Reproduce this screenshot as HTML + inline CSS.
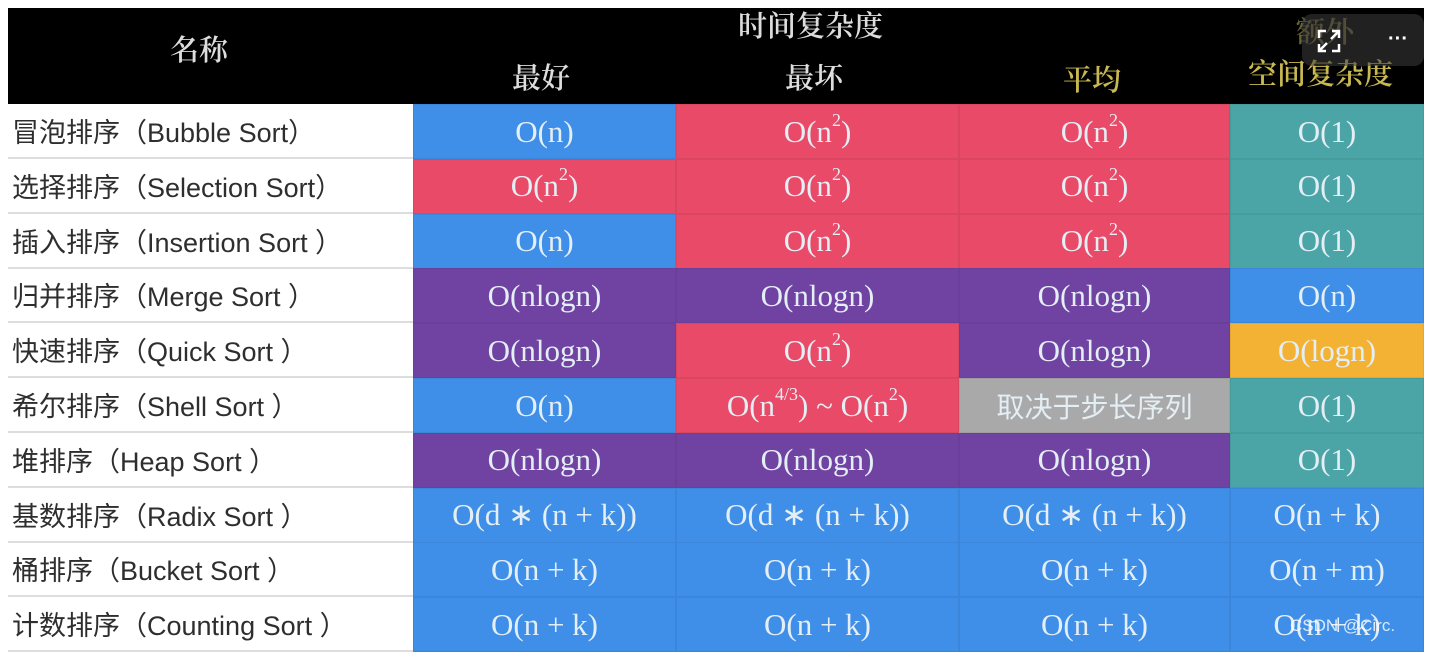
<!DOCTYPE html>
<html><head><meta charset="utf-8"><style>
body{margin:0;width:1432px;height:662px;background:#fff;position:relative;overflow:hidden;font-family:"Liberation Serif","Noto Serif CJK SC",serif}
.c{position:absolute;display:flex;align-items:center;justify-content:center;color:#e4eef5;font-size:31px;box-sizing:border-box;white-space:nowrap}
.n{justify-content:flex-start;color:#2e2e2e;font-family:"Liberation Sans","Noto Sans CJK SC",sans-serif;font-size:27px;padding-left:4px;border-bottom:2px solid #ddd}
.h{position:absolute;color:#ddd;font-family:"Noto Serif CJK SC",serif;font-size:29px;font-weight:600}
.B{background:#3f8fe9}.R{background:#e84a67}.P{background:#7043a3}.T{background:#4ba5a6}.O{background:#f3b233}.G{background:#a9a9a9}
sup{font-size:18px;position:relative;top:-12px;vertical-align:baseline;line-height:0}
.f{font-family:"Noto Sans CJK SC",sans-serif;font-size:28px}
</style></head><body>
<div style="position:absolute;left:8px;top:8px;width:1416px;height:96px;background:#000"></div>
<div class="h" style="left:170px;top:28px">名称</div>
<div class="h" style="left:738px;top:4px">时间复杂度</div>
<div class="h" style="left:512px;top:56px">最好</div>
<div class="h" style="left:785px;top:56px">最坏</div>
<div class="h" style="left:1063px;top:58px;color:#c8b850">平均</div>
<div class="h" style="left:1296px;top:10px;color:#6a6230">额外</div>
<div class="h" style="left:1248px;top:52px;color:#c8b850">空间复杂度</div>
<div style="position:absolute;left:1302px;top:14px;width:122px;height:52px;background:rgba(60,60,60,.55);border-radius:10px"></div>
<svg style="position:absolute;left:1316px;top:28px" width="26" height="26" viewBox="0 0 26 26" fill="none" stroke="#fff" stroke-width="2.5"><path d="M3 10V3h7M16 3h7v7M23 16v7h-7M10 23H3v-7M4 22l7-7M22 4l-7 7"/></svg>
<div style="position:absolute;left:1388px;top:28px;color:#fff;font:bold 20px 'Liberation Sans'">···</div>
<div id="t"></div>
<script>
const rows=[
["冒泡排序（Bubble Sort）",["B","O(n)"],["R","O(n<sup>2</sup>)"],["R","O(n<sup>2</sup>)"],["T","O(1)"]],
["选择排序（Selection Sort）",["R","O(n<sup>2</sup>)"],["R","O(n<sup>2</sup>)"],["R","O(n<sup>2</sup>)"],["T","O(1)"]],
["插入排序（Insertion Sort ）",["B","O(n)"],["R","O(n<sup>2</sup>)"],["R","O(n<sup>2</sup>)"],["T","O(1)"]],
["归并排序（Merge Sort ）",["P","O(nlogn)"],["P","O(nlogn)"],["P","O(nlogn)"],["B","O(n)"]],
["快速排序（Quick Sort ）",["P","O(nlogn)"],["R","O(n<sup>2</sup>)"],["P","O(nlogn)"],["O","O(logn)"]],
["希尔排序（Shell Sort ）",["B","O(n)"],["R","O(n<sup>4/3</sup>) ~ O(n<sup>2</sup>)"],["G","<span class=f>取决于步长序列</span>"],["T","O(1)"]],
["堆排序（Heap Sort ）",["P","O(nlogn)"],["P","O(nlogn)"],["P","O(nlogn)"],["T","O(1)"]],
["基数排序（Radix Sort ）",["B","O(d ∗ (n + k))"],["B","O(d ∗ (n + k))"],["B","O(d ∗ (n + k))"],["B","O(n + k)"]],
["桶排序（Bucket Sort ）",["B","O(n + k)"],["B","O(n + k)"],["B","O(n + k)"],["B","O(n + m)"]],
["计数排序（Counting Sort ）",["B","O(n + k)"],["B","O(n + k)"],["B","O(n + k)"],["B","O(n + k)"]]];
const xs=[8,413,676,959,1230,1424];let h="";
rows.forEach((r,i)=>{const y=104+i*54.8;
h+=`<div class="c n" style="left:8px;top:${y}px;width:405px;height:55px">${r[0]}</div>`;
for(let j=1;j<5;j++)h+=`<div class="c ${r[j][0]}" style="left:${xs[j]}px;top:${y}px;width:${xs[j+1]-xs[j]}px;height:55px;border:1px solid rgba(0,0,0,.06)">${r[j][1]}</div>`;});
document.getElementById("t").innerHTML=h;
</script>
<div style="position:absolute;left:1290px;top:616px;color:rgba(255,255,255,.8);font:17px 'Liberation Sans'">CSDN @Circ.</div>
</body></html>
